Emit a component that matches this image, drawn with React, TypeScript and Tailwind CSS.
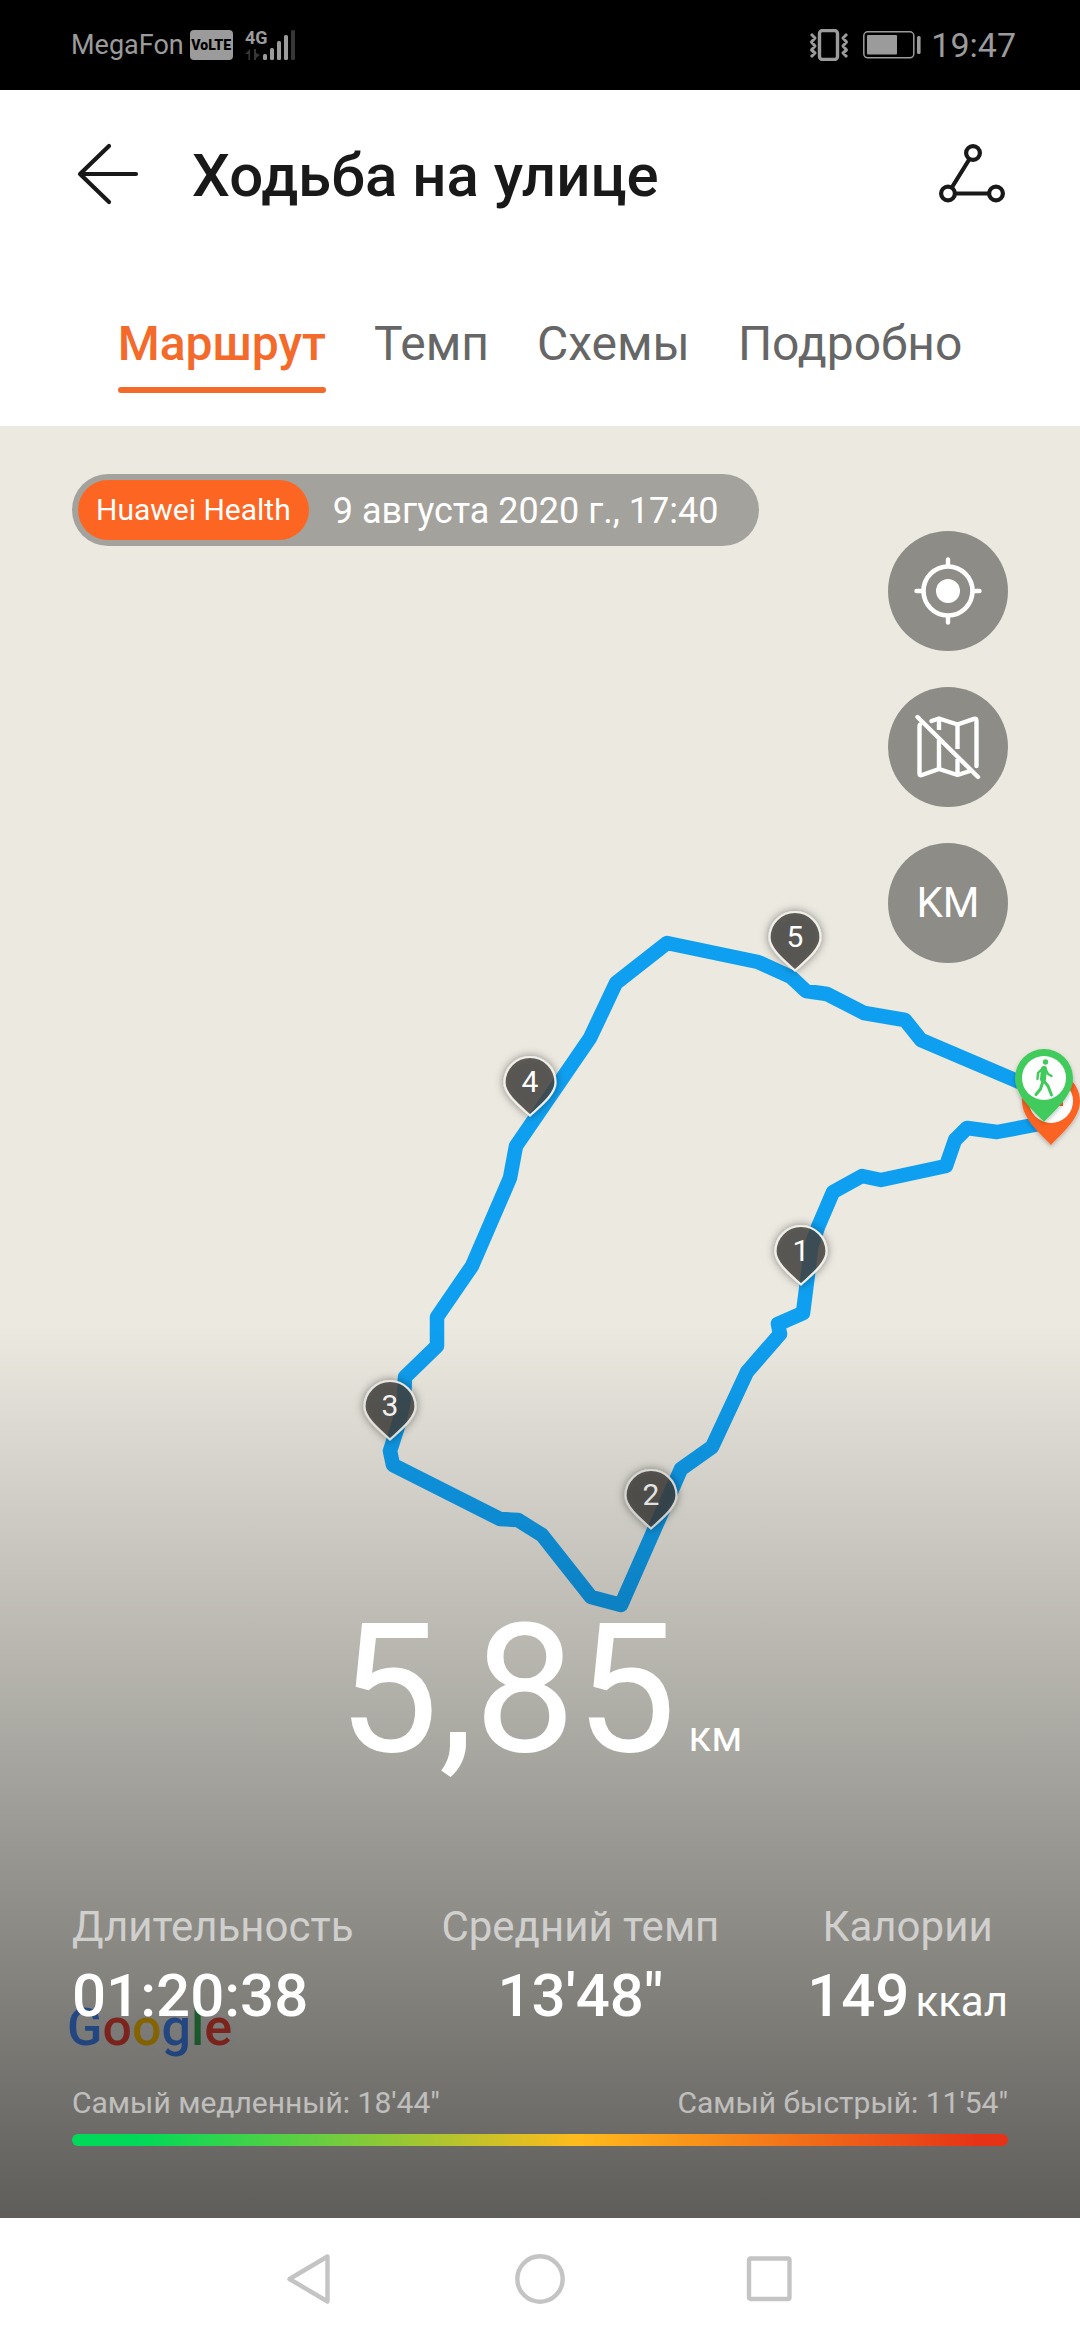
import React from "react";

const TABS = ["Маршрут", "Темп", "Схемы", "Подробно"];

const KILOMETRE_PINS = [
  { label: "1", x: 801, y: 860 },
  { label: "2", x: 651, y: 1104 },
  { label: "3", x: 390, y: 1015 },
  { label: "4", x: 530, y: 691 },
  { label: "5", x: 795, y: 546 },
];

const ROUTE =
  "1050,696 997,706 967,702 955,714 946,740 881,754 862,750 833,766 818,801 811,821 808,848 803,887 778,898 780,908 747,946 712,1021 681,1043 621,1179 591,1171 542,1109 518,1094 500,1093 393,1039 390,1025 399,997 404,974 405,951 437,920 437,891 472,840 510,752 516,720 590,612 616,557 667,517 758,536 791,551 806,565 827,568 864,587 905,594 921,614 1022,657 1044,666";

function StatusBar() {
  return (
    <div className="flex h-[90px] items-center justify-between bg-black pr-16 pl-[71px] text-[#9b9b9b]">
      <div className="flex items-center">
        <span className="text-[27px] leading-8">MegaFon</span>
        <span className="ml-1.5 flex h-[30px] w-[43px] items-center justify-center rounded-sm bg-[#9b9b9b] text-[14px] leading-none font-black text-black">
          VoLTE
        </span>
        <svg className="ml-3 h-12 w-[52px]" viewBox="0 -8 52 48" aria-label="4G">
          <text
            x="0"
            y="15"
            fill="#9b9b9b"
            className="text-[18px] font-bold [font-family:'Liberation_Sans_Narrow',Roboto,sans-serif]"
          >
            4G
          </text>
          <path d="M0 25L5 20V31H3.500V25ZM9 20H11V24L15 26L11 29V31H9Z" fill="#363636" />
          <g fill="#9b9b9b">
            <rect x="18" y="25" width="4" height="6" rx="1.500" />
            <rect x="25" y="19" width="4" height="12" rx="1.500" />
            <rect x="32" y="12" width="4" height="19" rx="1.500" />
            <rect x="39" y="6" width="4" height="25" rx="1.500" />
          </g>
          <rect x="46" y="1" width="4" height="30" rx="1.500" fill="#363636" />
        </svg>
      </div>
      <div className="flex items-center">
        <svg className="h-8 w-10" viewBox="0 0 40 32" fill="none" stroke="#9b9b9b" aria-label="Вибрация">
          <rect x="10.500" y="1.500" width="18" height="29" rx="3" strokeWidth="3.400" />
          <path
            d="M2 5L6 9L2.500 13L6 17L2.500 21L6 24L2 28M38 5L34 9L37.500 13L34 17L37.500 21L34 24L38 28"
            strokeWidth="3"
            strokeLinejoin="round"
          />
        </svg>
        <svg className="ml-3.5 h-7 w-[58px]" viewBox="0 0 58 28" aria-label="Батарея">
          <rect x="0.800" y="0.800" width="50" height="26" rx="4" fill="none" stroke="#9b9b9b" strokeWidth="1.500" />
          <rect x="4" y="4" width="30" height="19.500" rx="1" fill="#9b9b9b" />
          <rect x="54" y="5" width="3.600" height="18" rx="1.500" fill="#9b9b9b" />
        </svg>
        <span className="ml-2.5 text-[34px] leading-10">19:47</span>
      </div>
    </div>
  );
}

function Header() {
  return (
    <header className="bg-white">
      <div className="flex h-[168px] items-center px-[72px]">
        <button type="button" aria-label="Назад">
          <svg className="h-[72px] w-[72px]" viewBox="0 0 72 72" fill="none" stroke="#191919" strokeLinecap="round">
            <path d="M37 8L8 36L37 64" strokeWidth="4.200" strokeLinejoin="round" />
            <path d="M9 36H64" strokeWidth="4.200" />
          </svg>
        </button>
        <h1 className="ml-12 flex-1 pt-1 text-[60px] leading-[72px] font-medium text-[#191919]">Ходьба на улице</h1>
        <button type="button" aria-label="Трек">
          <svg className="h-[72px] w-[72px]" viewBox="0 0 72 72" fill="none" stroke="#191919" strokeWidth="4.200">
            <circle cx="37" cy="15" r="6.900" />
            <circle cx="12" cy="55.500" r="6.900" />
            <circle cx="60" cy="55.500" r="6.900" />
            <path d="M33.500 21L15.500 50M19 55.500H53" />
          </svg>
        </button>
      </div>
      <nav className="flex justify-center gap-12 pt-[58px] pb-[33px]">
        {TABS.map((tab, i) => (
          <button
            key={tab}
            type="button"
            className={
              i === 0
                ? "flex flex-col gap-[15px] text-[48px] leading-[56px] font-medium text-[#f36a2b]"
                : "flex flex-col gap-[15px] text-[48px] leading-[56px] text-[#666666]"
            }
          >
            <span>{tab}</span>
            <span className={i === 0 ? "h-1.5 w-full rounded-full bg-[#f36a2b]" : "h-1.5 w-full"} />
          </button>
        ))}
      </nav>
    </header>
  );
}

function RouteMap() {
  return (
    <svg
      className="absolute inset-0 h-full w-full"
      viewBox="0 0 1080 1792"
      preserveAspectRatio="xMidYMid slice"
      aria-label="Карта маршрута"
    >
      <defs>
        <filter id="pinShadow" x="-40%" y="-40%" width="180%" height="180%">
          <feDropShadow dx="0" dy="0" stdDeviation="4" floodColor="#000" floodOpacity="0.5" />
        </filter>
        <filter id="endShadow" x="-40%" y="-40%" width="180%" height="180%">
          <feDropShadow dx="0" dy="2" stdDeviation="2" floodColor="#000" floodOpacity="0.25" />
        </filter>
      </defs>
      <polyline
        points={ROUTE}
        fill="none"
        stroke="#0f9ff0"
        strokeWidth="14.500"
        strokeLinejoin="round"
        strokeLinecap="round"
      />
      {KILOMETRE_PINS.map((pin) => (
        <g key={pin.label} transform={`translate(${pin.x} ${pin.y})`}>
          <path
            d="M0 -1.500C-8 -9 -25.500 -22 -25.500 -34.500A25.500 25.500 0 0 1 25.500 -34.500C25.500 -22 8 -9 0 -1.500Z"
            fill="#46433f"
            fillOpacity="0.780"
            stroke="#f0efea"
            strokeWidth="2.200"
            filter="url(#pinShadow)"
          />
          <text x="0" y="-25" textAnchor="middle" fill="#fff" className="text-[30px]">
            {pin.label}
          </text>
        </g>
      ))}
      <g transform="translate(1051 719)" filter="url(#endShadow)">
        <path d="M0 0C-9 -10 -29 -26 -29 -44A29 29 0 0 1 29 -44C29 -26 9 -10 0 0Z" fill="#fa6421" />
        <circle cx="0" cy="-44" r="22" fill="#fff" />
        <rect x="-12" y="-54" width="24" height="15" fill="#fa6421" />
      </g>
      <g transform="translate(1044 696)" filter="url(#endShadow)">
        <path d="M0 0C-9 -10 -29 -26 -29 -44A29 29 0 0 1 29 -44C29 -26 9 -10 0 0Z" fill="#40cb5c" />
        <circle cx="0" cy="-44" r="22" fill="#fff" />
        <g fill="none" stroke="#40cb5c" strokeLinecap="round" strokeLinejoin="round">
          <circle cx="1.500" cy="-60" r="2.700" fill="#40cb5c" stroke="none" />
          <path d="M0 -53L-1 -43" strokeWidth="6" />
          <path d="M-1 -42L4 -36L7.500 -27M-1 -41L-3.500 -33L-8 -27.500" strokeWidth="3" />
          <path d="M-1 -54L-6 -49L-6.500 -43M2 -52L4 -48L7.500 -46" strokeWidth="2.400" />
        </g>
      </g>
      <text
        x="67"
        y="1619"
        className="text-[52px] font-medium"
        stroke="#dfe8ff"
        strokeOpacity="0.120"
        strokeWidth="12"
        strokeLinejoin="round"
        paintOrder="stroke"
      >
        <tspan fill="#4285f4">G</tspan>
        <tspan fill="#ea4335">o</tspan>
        <tspan fill="#fbbc05">o</tspan>
        <tspan fill="#4285f4">g</tspan>
        <tspan fill="#34a853">l</tspan>
        <tspan fill="#ea4335">e</tspan>
      </text>
    </svg>
  );
}

const ROUND_BUTTON = "flex h-[120px] w-[120px] items-center justify-center rounded-full bg-black/40 text-white";

function MapButtons() {
  return (
    <div className="mt-[57px] flex flex-col gap-9">
      <button type="button" className={ROUND_BUTTON} aria-label="Моё местоположение">
        <svg className="h-[72px] w-[72px]" viewBox="0 0 72 72" fill="none" stroke="#fff" strokeLinecap="round">
          <circle cx="36" cy="36" r="24.500" strokeWidth="4.600" />
          <circle cx="36" cy="36" r="12" fill="#fff" stroke="none" />
          <path d="M36 4.500V10M36 62V67.500M4.500 36H10M62 36H67.500" strokeWidth="4.400" />
        </svg>
      </button>
      <button type="button" className={ROUND_BUTTON} aria-label="Скрыть карту">
        <svg
          className="h-[72px] w-[72px]"
          viewBox="0 0 72 72"
          fill="none"
          stroke="#fff"
          strokeWidth="4.400"
          strokeLinecap="round"
          strokeLinejoin="round"
        >
          <path d="M8 13.500Q7.500 14 7.500 16V62.500Q7.500 65 10 64L27 58L45.500 64L58 60" />
          <path d="M19.500 10L27 7.500L45.500 13.500L62 7.800Q64.500 7 64.500 10V55" />
          <path d="M27 8V19M27 29V58M45.500 14V38M45.500 48V63" strokeLinecap="butt" />
          <path d="M5.500 6L66 66" />
        </svg>
      </button>
      <button type="button" className={ROUND_BUTTON}>
        <span className="text-[42px] leading-[48px]">KM</span>
      </button>
    </div>
  );
}

function Summary() {
  return (
    <div className="flex flex-col text-white">
      <div className="flex items-baseline justify-center gap-3 text-[180px] leading-[180px]">
        <span>5,85</span>
        <span className="text-[42px] leading-[48px]">км</span>
      </div>
      <dl className="mt-[122px] flex justify-between">
        <div className="flex flex-col gap-2">
          <dt className="text-[42px] leading-[50px] text-white/60">Длительность</dt>
          <dd className="text-[60px] leading-[72px] font-medium">01:20:38</dd>
        </div>
        <div className="flex flex-col gap-2 text-center">
          <dt className="text-[42px] leading-[50px] text-white/60">Средний темп</dt>
          <dd className="text-[60px] leading-[72px] font-medium">13'48"</dd>
        </div>
        <div className="flex flex-col gap-2 text-center">
          <dt className="text-[42px] leading-[50px] text-white/60">Калории</dt>
          <dd className="flex items-baseline justify-center gap-1.5 text-[60px] leading-[72px] font-medium">
            149
            <span className="text-[42px] leading-[50px] font-normal">ккал</span>
          </dd>
        </div>
      </dl>
      <div className="mt-[51px] flex justify-between text-[30px] leading-10 text-white/55">
        <span>Самый медленный: 18'44"</span>
        <span>Самый быстрый: 11'54"</span>
      </div>
      <div className="mt-[11px] h-3 rounded-full bg-[linear-gradient(90deg,#00d95a_0%,#04d958_8%,#ffbb1c_54%,#e63217_97%)]" />
    </div>
  );
}

function NavigationBar() {
  return (
    <nav className="flex h-[122px] items-center justify-center gap-[180px] bg-white">
      <button type="button" aria-label="Назад">
        <svg className="h-[50px] w-[50px]" viewBox="0 0 50 50" fill="none" stroke="#c4c4c4" strokeWidth="4.400">
          <path d="M42.500 2.500V47.500L4.500 25Z" strokeLinejoin="round" />
        </svg>
      </button>
      <button type="button" aria-label="Главный экран">
        <svg className="h-[50px] w-[50px]" viewBox="0 0 50 50" fill="none" stroke="#c4c4c4" strokeWidth="4.400">
          <circle cx="25" cy="25" r="22.700" />
        </svg>
      </button>
      <button type="button" aria-label="Недавние приложения">
        <svg className="h-[50px] w-[50px]" viewBox="0 0 50 50" fill="none" stroke="#c4c4c4" strokeWidth="4.400">
          <rect x="4" y="4.500" width="40.500" height="40.500" rx="1.500" />
        </svg>
      </button>
    </nav>
  );
}

export default function App() {
  return (
    <div className="flex min-h-screen flex-col bg-white [font-family:Roboto,sans-serif]">
      <StatusBar />
      <Header />
      <main className="relative flex flex-1 flex-col overflow-hidden bg-[#ebe9e0]">
        <RouteMap />
        <div className="absolute inset-x-0 bottom-0 h-[893px] bg-[linear-gradient(to_bottom,rgba(0,0,0,0),rgba(0,0,0,0.6))]" />
        <div className="relative flex flex-1 flex-col justify-between px-[72px] pt-12 pb-[72px]">
          <div className="flex items-start justify-between">
            <div className="flex items-center rounded-full bg-black/30 p-1.5 pr-10 text-white">
              <span className="rounded-full bg-[#fd6622] px-[18px] text-[30px] leading-[60px]">Huawei Health</span>
              <span className="ml-6 pt-0.5 text-[36px] leading-[44px]">9 августа 2020 г., 17:40</span>
            </div>
            <MapButtons />
          </div>
          <Summary />
        </div>
      </main>
      <NavigationBar />
    </div>
  );
}
